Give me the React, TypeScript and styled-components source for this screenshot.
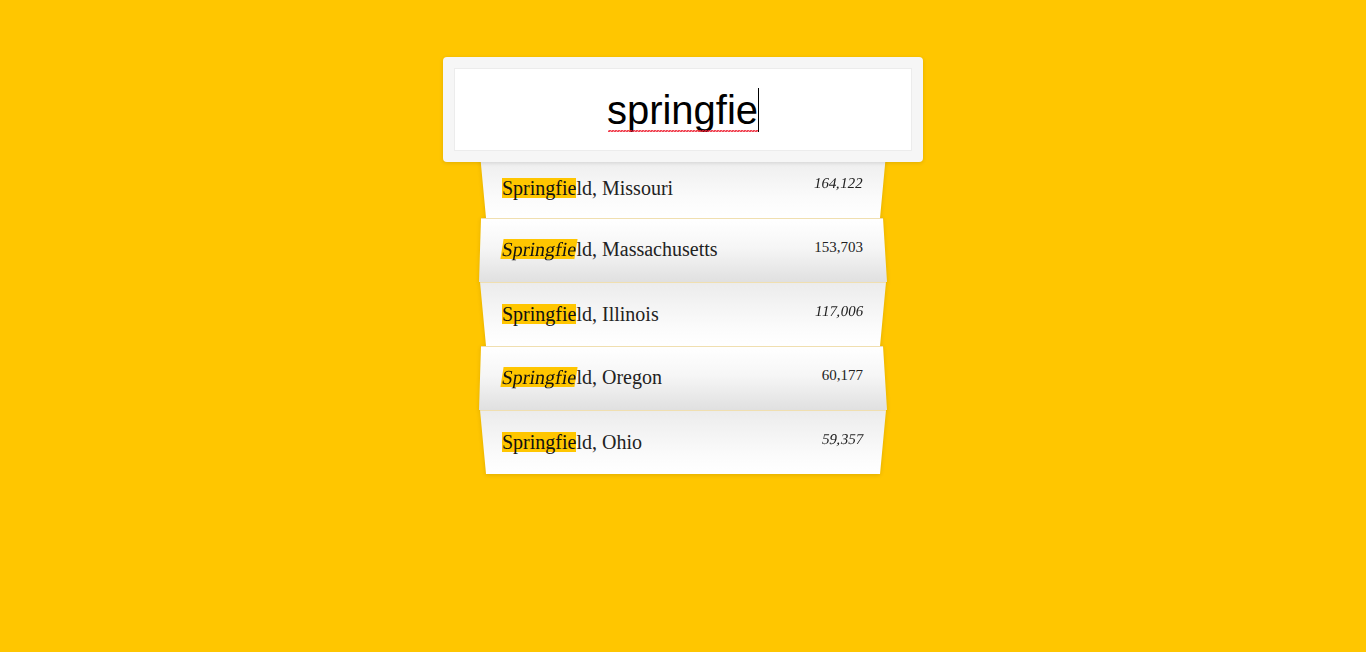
import React from "react";
import styled, { createGlobalStyle, css } from "styled-components";

const GlobalStyle = createGlobalStyle`
  html, body {
    margin: 0;
    padding: 0;
    background: #ffc600;
  }
  body {
    font-family: "Liberation Serif", "Times New Roman", serif;
  }
`;

const Page = styled.div`
  width: 100%;
  height: 652px;
  background: #ffc600;
  display: flex;
  flex-direction: column;
  align-items: center;
  padding-top: 57px;
  box-sizing: border-box;
`;

const SearchBox = styled.div`
  position: relative;
  z-index: 2;
  width: 480px;
  height: 105px;
  box-sizing: border-box;
  padding: 11px;
  background: #f6f6f6;
  border-radius: 4px;
  box-shadow: 0 1px 4px rgba(0, 0, 0, 0.12);
`;

const Field = styled.div`
  height: 83px;
  box-sizing: border-box;
  background: #fff;
  border: 1px solid #ececec;
  display: flex;
  align-items: center;
  justify-content: center;
  font-family: "Liberation Sans", Arial, sans-serif;
  font-size: 40px;
  color: #000;
`;

const Typed = styled.span`
  position: relative;
  line-height: 46px;
  &::after {
    content: "";
    position: absolute;
    left: 1px;
    right: 0;
    bottom: 1px;
    height: 2px;
    background:
      linear-gradient(135deg, transparent 35%, #e23 35%, #e23 65%, transparent 65%) 0 0 / 3px 2px repeat-x,
      linear-gradient(45deg, transparent 35%, #e23 35%, #e23 65%, transparent 65%) 1.5px 0 / 3px 2px repeat-x;
    opacity: 0.85;
  }
`;

const Caret = styled.span`
  display: inline-block;
  width: 0;
  height: 44px;
  border-left: 1px solid #000;
`;

const List = styled.div`
  position: relative;
  z-index: 1;
  margin-top: -8px;
  width: 408px;
  display: flex;
  flex-direction: column;
  filter: drop-shadow(0 1px 2px rgba(0, 0, 0, 0.12));
`;

const Row = styled.div<{ $odd: boolean; $first: boolean }>`
  height: 64px;
  box-sizing: border-box;
  display: flex;
  align-items: center;
  justify-content: space-between;
  padding: 0 24px 0 23px;
  ${(p) =>
    p.$odd
      ? css`
          background: linear-gradient(#ececec, #fbfbfb 70%, #ffffff);
          clip-path: polygon(1px 0, 407px 0, 401px 100%, 7px 100%);
        `
      : css`
          background: linear-gradient(#ffffff, #f6f6f6 45%, #e0e0e0);
          clip-path: polygon(2px 0, 404px 0, 408px 100%, 0 100%);
        `}
  ${(p) =>
    !p.$first &&
    css`
      border-top: 1px solid #f0dfb0;
    `}
`;

const Name = styled.span<{ $shift: number }>`
  font-size: 20px;
  line-height: 20px;
  color: #222;
  margin-top: ${(p) => p.$shift}px;
`;

const Match = styled.span<{ $slant: boolean }>`
  display: inline-block;
  background: #ffc600;
  color: #111;
  height: 20px;
  line-height: 21px;
  ${(p) =>
    p.$slant &&
    css`
      transform: skewX(-9deg);
    `}
`;

const Count = styled.span<{ $slant: boolean }>`
  display: inline-block;
  font-size: 15px;
  color: #222;
  margin-bottom: 6px;
  ${(p) =>
    p.$slant &&
    css`
      transform: skewX(-10deg);
    `}
`;

const cities = [
  { rest: "ld, Missouri", pop: "164,122" },
  { rest: "ld, Massachusetts", pop: "153,703" },
  { rest: "ld, Illinois", pop: "117,006" },
  { rest: "ld, Oregon", pop: "60,177" },
  { rest: "ld, Ohio", pop: "59,357" },
];

export default function App() {
  return (
    <>
      <GlobalStyle />
      <Page>
        <SearchBox>
          <Field>
            <Typed>springfie</Typed>
            <Caret />
          </Field>
        </SearchBox>
        <List>
          {cities.map((c, i) => {
            const odd = i % 2 === 0;
            const shift = i === 0 ? 3 : odd ? -1 : -3;
            return (
              <Row key={c.pop} $odd={odd} $first={i === 0}>
                <Name $shift={shift}>
                  <Match $slant={!odd}>Springfie</Match>
                  {c.rest}
                </Name>
                <Count $slant={odd}>{c.pop}</Count>
              </Row>
            );
          })}
        </List>
      </Page>
    </>
  );
}
